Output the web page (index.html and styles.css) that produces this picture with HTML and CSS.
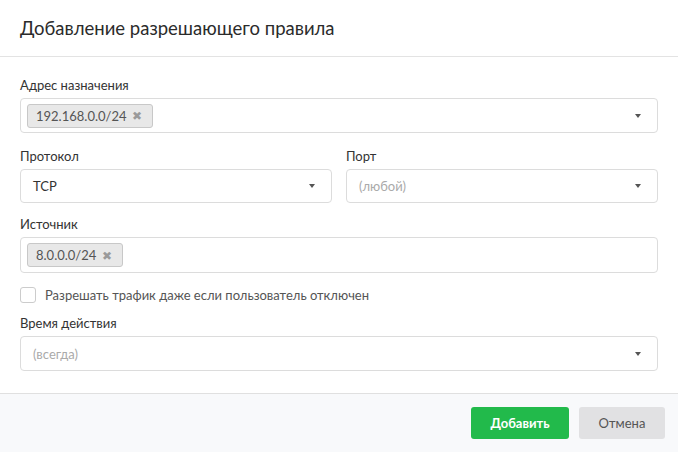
FILE: index.html
```html
<!DOCTYPE html>
<html lang="ru">
<head>
<meta charset="utf-8">
<link rel="stylesheet" href="styles.css">
</head>
<body>
<div class="modal">
  <div class="header"><h1 class="title">Добавление разрешающего правила</h1></div>
  <div class="content">
    <div class="field">
      <div class="label">Адрес назначения</div>
      <div class="select">
        <div class="tags"><span class="tag">192.168.0.0/24 <span class="x">✖</span></span></div>
        <span class="caret"></span>
      </div>
    </div>
    <div class="row">
      <div class="field">
        <div class="label">Протокол</div>
        <div class="select short"><span class="value">TCP</span><span class="caret"></span></div>
      </div>
      <div class="field">
        <div class="label">Порт</div>
        <div class="select short"><span class="value placeholder">(любой)</span><span class="caret"></span></div>
      </div>
    </div>
    <div class="field">
      <div class="label">Источник</div>
      <div class="select tall">
        <div class="tags"><span class="tag">8.0.0.0/24 <span class="x">✖</span></span></div>
      </div>
    </div>
    <label class="check"><span class="box"></span><span class="check-text">Разрешать трафик даже если пользователь отключен</span></label>
    <div class="field">
      <div class="label">Время действия</div>
      <div class="select"><span class="value placeholder">(всегда)</span><span class="caret"></span></div>
    </div>
  </div>
  <div class="footer">
    <button class="btn btn-primary">Добавить</button>
    <button class="btn btn-cancel">Отмена</button>
  </div>
</div>
</body>
</html>
```
FILE: styles.css
```css
* { box-sizing: border-box; }
html, body { margin: 0; padding: 0; background: #fff; }
body {
  font-family: Lato, "Noto Sans", sans-serif;
  color: #333;
  width: 678px;
  height: 452px;
  overflow: hidden;
}
.modal { display: flex; flex-direction: column; height: 452px; }
.header {
  height: 57px;
  padding: 0 20px;
  display: flex;
  align-items: center;
  border-bottom: 1px solid #e3e3e3;
}
.title {
  margin: 0;
  font-size: 18.5px;
  font-weight: 400;
  color: #2b2b2b;
}
.content {
  flex: 1;
  padding: 20px 20px 0 20px;
}
.field { margin-bottom: 15px; }
.row .field { margin-bottom: 13px; }
.label {
  font-size: 13px;
  line-height: 16px;
  margin-bottom: 5px;
  color: #333;
}
.row { display: flex; gap: 14px; }
.row .field { flex: 1; }
.select {
  height: 35px;
  border: 1px solid #dcdcdc;
  border-radius: 4px;
  display: flex;
  align-items: center;
  padding: 0 16px 0 6px;
  background: #fff;
}
.select.short { height: 34px; }
.select.tall { height: 36px; }
.select .value { flex: 1; font-size: 13px; padding-left: 6px; color: #333; }
.select .placeholder { color: #aaa; }
.tags { flex: 1; display: flex; }
.tag {
  display: inline-flex;
  align-items: center;
  height: 24px;
  padding: 0 10px 0 8px;
  background: #e8e8e8;
  border: 1px solid #c8c8c8;
  border-radius: 3px;
  font-size: 13px;
  color: #555;
}
.tag .x { color: #9a9a9a; font-size: 12px; margin-left: 6px; }
.caret {
  width: 0; height: 0;
  border-left: 3.5px solid transparent;
  border-right: 3.5px solid transparent;
  border-top: 4px solid #555;
}
.check {
  display: flex;
  align-items: center;
  height: 16px;
  margin: -1px 0 12px 0;
}
.box {
  width: 16px; height: 16px;
  border: 1px solid #ccc;
  border-radius: 3px;
  margin-right: 9px;
}
.check-text { font-size: 13px; color: #555; }
.footer {
  height: 59px;
  border-top: 1px solid #e0e0e0;
  background: #f8f9fb;
  display: flex;
  justify-content: flex-end;
  align-items: center;
  gap: 10px;
  padding: 0 13px 0 0;
}
.btn {
  height: 32px;
  border: none;
  border-radius: 3px;
  font-family: Lato, "Noto Sans", sans-serif;
  font-size: 13px;
  padding: 0;
}
.btn-primary { width: 98px; background: #22ba4b; color: #fff; font-weight: 700; }
.btn-cancel { width: 86px; background: #e1e1e3; color: #555; }
```
